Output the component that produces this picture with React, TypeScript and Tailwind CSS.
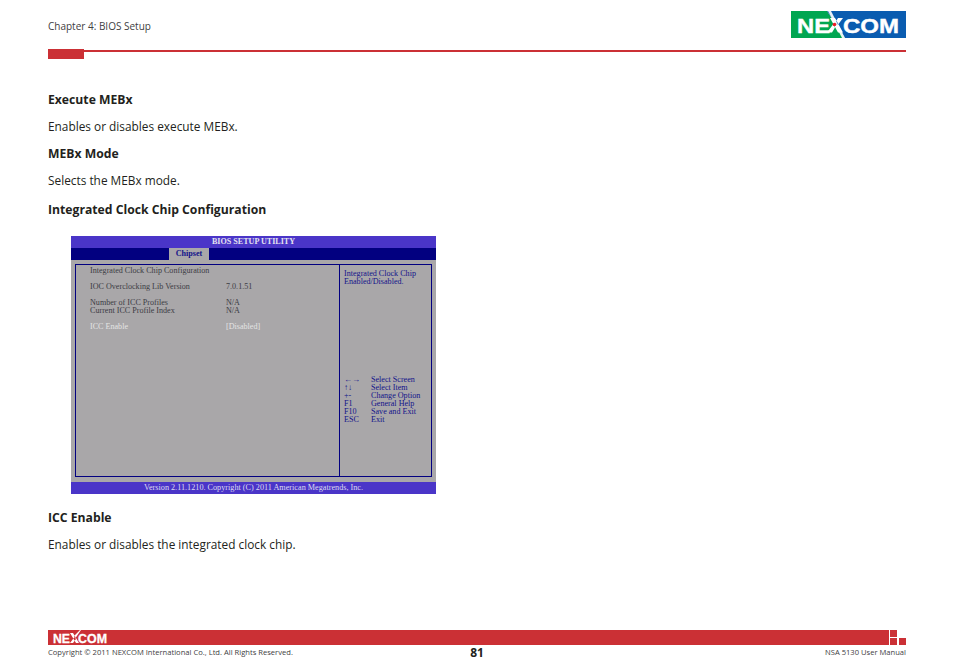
const serif = "font-['Liberation_Serif',serif]";

function Logo() {
  return (
    <svg width="115" height="27" viewBox="0 0 115 27" className="block">
      <polygon points="0,0 36,0 54,27 0,27" fill="#00a651" />
      <polygon points="36,0 115,0 115,27 54,27" fill="#0a5cb0" />
      <text x="6" y="21.500" fontFamily="'Liberation Sans',sans-serif" fontWeight="700" fontSize="20" fill="#fff" stroke="#fff" strokeWidth="0.400" textLength="33" lengthAdjust="spacingAndGlyphs">NE</text>
      <path d="M37 0h3l14 27h-3z" fill="#fff" opacity="0.900" />
      <path d="M39 7h5l8 14.500h-5z M52 7h-5l-3 5 2 3z M36 21.500h5l3-5-2-3z" fill="#fff" />
      <circle cx="43.500" cy="13.500" r="1.800" fill="#ed1c24" />
      <text x="52" y="21.500" fontFamily="'Liberation Sans',sans-serif" fontWeight="700" fontSize="20" fill="#fff" stroke="#fff" strokeWidth="0.400" textLength="56" lengthAdjust="spacingAndGlyphs">COM</text>
    </svg>
  );
}

function SmallLogo() {
  return (
    <svg width="54" height="15" viewBox="0 0 54 15" className="block">
      <text x="0" y="12.500" fontFamily="'Liberation Sans',sans-serif" fontWeight="700" fontSize="13" fill="#fff" stroke="#fff" strokeWidth="0.300" textLength="17" lengthAdjust="spacingAndGlyphs">NE</text>
      <path d="M17 3h3l6 10h-3z M27 0l-6 6 1.500 2 5.500-8z M17 13h3l3-4-1.500-2z" fill="#fff" />
      <text x="25" y="12.500" fontFamily="'Liberation Sans',sans-serif" fontWeight="700" fontSize="13" fill="#fff" stroke="#fff" strokeWidth="0.300" textLength="29" lengthAdjust="spacingAndGlyphs">COM</text>
    </svg>
  );
}

function Heading({ children, className = "" }: { children: string; className?: string }) {
  return <h2 className={`text-[12.2px] leading-[18px] font-bold text-[#231f20] ${className}`}>{children}</h2>;
}

function Body({ children, className = "" }: { children: string; className?: string }) {
  return <p className={`text-[11.85px] leading-[18px] text-[#231f20] ${className}`}>{children}</p>;
}

function Row({ label, value, className = "" }: { label: string; value: string; className?: string }) {
  return (
    <div className={`flex h-2 items-center ${className}`}>
      <span className="w-[136px]">{label}</span>
      <span>{value}</span>
    </div>
  );
}

function Key({ k, v }: { k: string; v: string }) {
  return (
    <div className="flex h-2 items-center">
      <span className="w-[27px]">{k}</span>
      <span>{v}</span>
    </div>
  );
}

function Bios() {
  return (
    <div className={`ml-[23px] flex h-[258px] w-[365px] flex-col text-[8.1px] ${serif}`}>
      <div className="flex h-3 items-center justify-center bg-[#4a35c8] font-bold text-[#e4e2f0]">BIOS SETUP UTILITY</div>
      <div className="flex h-3 bg-[#020080] pl-[98px]">
        <div className="flex w-10 items-center justify-center bg-[#a9a7a9] font-bold text-[#13138a]">Chipset</div>
      </div>
      <div className="flex-1 bg-[#a9a7a9] px-1 pt-1 pb-[5px]">
        <div className="flex h-full border border-[#020080]">
          <div className="w-[264px] border-r border-[#020080] pt-[2px] pl-[14px] text-[#3c3c44]">
            <Row label="Integrated Clock Chip Configuration" value="" />
            <Row label="IOC Overclocking Lib Version" value="7.0.1.51" className="mt-2" />
            <Row label="Number of ICC Profiles" value="N/A" className="mt-2" />
            <Row label="Current ICC Profile Index" value="N/A" />
            <Row label="ICC Enable" value="[Disabled]" className="mt-2 text-[#e4e4e4]" />
          </div>
          <div className="flex flex-1 flex-col pt-[5px] pl-1 text-[#13138a]">
            <div className="leading-2">
              Integrated Clock Chip
              <br />
              Enabled/Disabled.
            </div>
            <div className="mt-[90px]">
              <Key k="←→" v="Select Screen" />
              <Key k="↑↓" v="Select Item" />
              <Key k="+-" v="Change Option" />
              <Key k="F1" v="General Help" />
              <Key k="F10" v="Save and Exit" />
              <Key k="ESC" v="Exit" />
            </div>
          </div>
        </div>
      </div>
      <div className="flex h-3 items-center justify-center bg-[#4a35c8] text-[8.2px] text-[#dcdaf0]">
        Version 2.11.1210. Copyright (C) 2011 American Megatrends, Inc.
      </div>
    </div>
  );
}

export default function App() {
  return (
    <div className="flex h-[672px] w-[954px] flex-col overflow-hidden bg-white font-['Open_Sans',sans-serif]">
      <header className="flex h-[38px] items-end justify-between pr-12 pl-12">
        <span className="mb-[5px] text-[10px] leading-[14px] text-[#414042]">Chapter 4: BIOS Setup</span>
        <Logo />
      </header>
      <div className="mt-[11px] flex h-[10px] items-start pr-12 pl-12">
        <div className="h-[10px] w-9 bg-[#cb3035]" />
        <div className="mt-px h-[2px] flex-1 bg-[#cb3035]" />
      </div>
      <main className="flex flex-1 flex-col pl-12">
        <Heading className="mt-[32px]">Execute MEBx</Heading>
        <Body className="mt-2">Enables or disables execute MEBx.</Body>
        <Heading className="mt-[10px]">MEBx Mode</Heading>
        <Body className="mt-2">Selects the MEBx mode.</Body>
        <Heading className="mt-3">Integrated Clock Chip Configuration</Heading>
        <div className="mt-[17px]">
          <Bios />
        </div>
        <Heading className="mt-[15px]">ICC Enable</Heading>
        <Body className="mt-2">Enables or disables the integrated clock chip.</Body>
      </main>
      <footer className="h-[42px] pr-12 pl-12">
        <div className="flex h-[15px] items-start">
          <div className="flex h-[15px] flex-1 items-center bg-[#cb3035] pl-[5px]">
            <SmallLogo />
          </div>
          <div className="ml-px flex h-[15px] w-[16px] flex-col gap-px">
            <div className="h-[7px] w-[7px] bg-[#cb3035]" />
            <div className="flex items-end justify-between">
              <div className="h-[7px] w-[7px] bg-[#cb3035]" />
              <div className="h-[7px] w-[7px] bg-[#cb3035]" />
            </div>
          </div>
        </div>
        <div className="flex items-start">
          <span className="mt-px flex-1 text-[7.6px] leading-3 text-[#414042]">Copyright © 2011 NEXCOM International Co., Ltd. All Rights Reserved.</span>
          <span className="text-[12px] leading-4 font-bold text-[#231f20]">81</span>
          <span className="mt-px flex-1 text-right text-[7.6px] leading-3 text-[#414042]">NSA 5130 User Manual</span>
        </div>
      </footer>
    </div>
  );
}
